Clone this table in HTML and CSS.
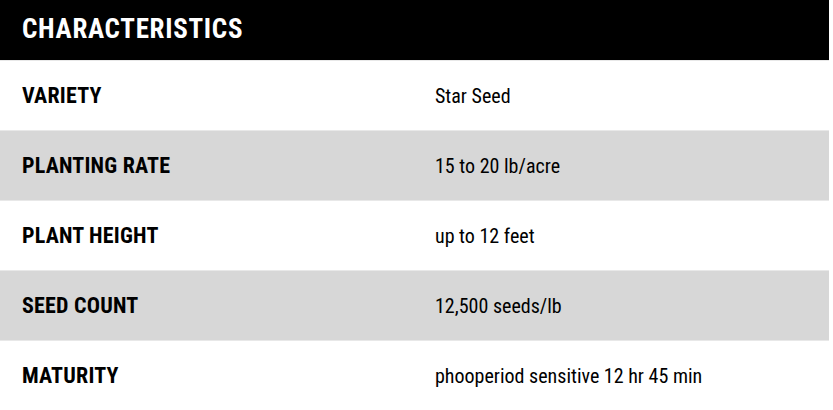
FILE: index.html
```html
<!DOCTYPE html>
<html>
<head>
<meta charset="utf-8">
<link rel="stylesheet" href="styles.css">
</head>
<body>
<section class="specs">
  <h2 class="specs-title">CHARACTERISTICS</h2>
  <div class="row">
    <div class="label">VARIETY</div>
    <div class="value">Star Seed</div>
  </div>
  <div class="row alt">
    <div class="label">PLANTING RATE</div>
    <div class="value">15 to 20 lb/acre</div>
  </div>
  <div class="row">
    <div class="label">PLANT HEIGHT</div>
    <div class="value">up to 12 feet</div>
  </div>
  <div class="row alt">
    <div class="label">SEED COUNT</div>
    <div class="value">12,500 seeds/lb</div>
  </div>
  <div class="row">
    <div class="label">MATURITY</div>
    <div class="value">phooperiod sensitive 12 hr 45 min</div>
  </div>
</section>
</body>
</html>
```
FILE: styles.css
```css
html, body {
  margin: 0;
  padding: 0;
  background: #fff;
}
body {
  font-family: "Roboto Condensed", Roboto, "Liberation Sans", sans-serif;
  color: #000;
}
.specs {
  width: 829px;
}
.specs-title {
  margin: 0;
  height: 61px;
  box-sizing: border-box;
  background: #000;
  color: #fff;
  font-size: 27px;
  font-weight: 700;
  letter-spacing: 0.7px;
  line-height: 58px;
  padding-left: 22px;
  border-bottom: 1px solid #e8e8e8;
}
.row {
  display: grid;
  grid-template-columns: 413px 1fr;
  align-items: center;
  height: 70px;
  box-sizing: border-box;
  border-top: 1px solid #e8e8e8;
  padding-left: 22px;
}
.row:first-of-type {
  border-top: none;
  height: 69px;
}
.alt {
  background: #d7d7d7;
}
.label {
  font-size: 22px;
  font-weight: 700;
  letter-spacing: 0.2px;
}
.value {
  font-size: 20px;
  font-weight: 400;
}
```
